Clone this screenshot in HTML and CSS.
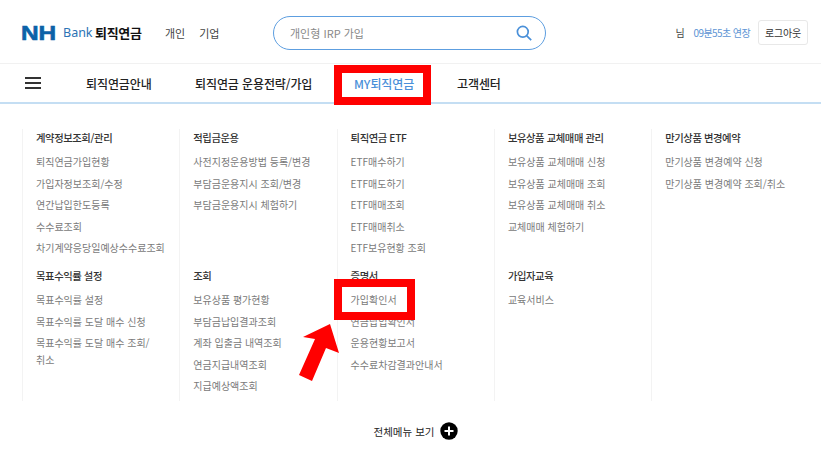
FILE: index.html
```html
<!DOCTYPE html>
<html lang="ko">
<head>
<meta charset="utf-8">
<title>NH Bank 퇴직연금</title>
<link rel="stylesheet" href="styles.css">
</head>
<body>
<header class="top">
  <div class="logo"><span class="nh">NH</span><span class="bank">Bank</span><span class="pension">퇴직연금</span></div>
  <div class="kinds"><span>개인</span><span>기업</span></div>
  <div class="search">
    <span class="placeholder">개인형 IRP 가입</span>
    <svg class="search-icon" width="16" height="16" viewBox="0 0 16 16" fill="none" stroke="#4a90d9" stroke-width="1.7"><circle cx="6.8" cy="6.8" r="5.4"/><path d="M10.8 10.8l4.4 4.4"/></svg>
  </div>
  <div class="session">
    <span class="user">님</span>
    <span class="timer">09분55초 연장</span>
    <span class="logout">로그아웃</span>
  </div>
</header>
<nav class="gnb">
  <div class="burger"><i></i><i></i><i></i></div>
  <span class="gnb-a">퇴직연금안내</span>
  <span class="gnb-b">퇴직연금 운용전략/가입</span>
  <span class="gnb-c">MY퇴직연금</span>
  <span class="gnb-d">고객센터</span>
</nav>
<main class="menu">
  <div class="col">
    <section class="upper"><h3>계약정보조회/관리</h3><ul><li>퇴직연금가입현황</li><li>가입자정보조회/수정</li><li>연간납입한도등록</li><li>수수료조회</li><li>차기계약응당일예상수수료조회</li></ul></section>
    <section><h3>목표수익률 설정</h3><ul><li>목표수익률 설정</li><li>목표수익률 도달 매수 신청</li><li class="wrap">목표수익률 도달 매수 조회/취소</li></ul></section>
  </div>
  <div class="col">
    <section class="upper"><h3>적립금운용</h3><ul><li>사전지정운용방법 등록/변경</li><li>부담금운용지시 조회/변경</li><li>부담금운용지시 체험하기</li></ul></section>
    <section><h3>조회</h3><ul><li>보유상품 평가현황</li><li>부담금납입결과조회</li><li>계좌 입출금 내역조회</li><li>연금지급내역조회</li><li>지급예상액조회</li></ul></section>
  </div>
  <div class="col">
    <section class="upper"><h3>퇴직연금 ETF</h3><ul><li>ETF매수하기</li><li>ETF매도하기</li><li>ETF매매조회</li><li>ETF매매취소</li><li>ETF보유현황 조회</li></ul></section>
    <section><h3>증명서</h3><ul><li>가입확인서</li><li>연금납입확인서</li><li>운용현황보고서</li><li>수수료차감결과안내서</li></ul></section>
  </div>
  <div class="col">
    <section class="upper"><h3>보유상품 교체매매 관리</h3><ul><li>보유상품 교체매매 신청</li><li>보유상품 교체매매 조회</li><li>보유상품 교체매매 취소</li><li>교체매매 체험하기</li></ul></section>
    <section><h3>가입자교육</h3><ul><li>교육서비스</li></ul></section>
  </div>
  <div class="col">
    <section class="upper"><h3>만기상품 변경예약</h3><ul><li>만기상품 변경예약 신청</li><li>만기상품 변경예약 조회/취소</li></ul></section>
  </div>
</main>
<footer class="all"><span>전체메뉴 보기</span><svg width="18" height="18" viewBox="0 0 18 18"><circle cx="9" cy="9" r="8.7" fill="#000"/><path d="M9 4.5v9M4.5 9h9" stroke="#fff" stroke-width="2"/></svg></footer>
<div class="mark mark-nav"></div>
<div class="mark mark-item"></div>
<svg class="arrow" width="42" height="60" viewBox="0 0 42 60"><polygon points="31,1 40,30 27,25 13,58 0,52 16,16 4,14" fill="#f00"/></svg>
</body>
</html>
```
FILE: styles.css
```css
* { box-sizing: border-box; }
html, body { margin: 0; padding: 0; }
body {
  width: 821px;
  height: 457px;
  overflow: hidden;
  position: relative;
  background: #fff;
  color: #222;
  font-family: "Noto Sans CJK KR", "Noto Sans", sans-serif;
  font-size: 11px;
}
.top {
  height: 64px;
  display: flex;
  align-items: center;
  padding: 2px 0 0 21px;
  border-bottom: 1px solid #f1f1f1;
}
.logo { display: flex; align-items: center; width: 144px; }
.nh {
  font-family: "Liberation Sans", sans-serif;
  font-weight: 700;
  font-size: 20px;
  line-height: 20px;
  color: #0b62a8;
  -webkit-text-stroke: 0.6px #0b62a8;
  transform: scaleX(1.22);
  transform-origin: left center;
  width: 42px;
}
.bank { color: #2a72b5; font-size: 12.5px; font-family: "Noto Sans", sans-serif; width: 32px; }
.pension { font-size: 13px; font-weight: 700; color: #111; letter-spacing: -0.3px; }
.kinds { display: flex; gap: 14px; width: 108px; color: #444; font-size: 11px; }
.search {
  width: 273px;
  height: 34px;
  border: 1.5px solid #5d9ee0;
  border-radius: 17px;
  display: flex;
  align-items: center;
  justify-content: space-between;
  padding: 0 13px 0 16px;
}
.placeholder { color: #888; font-size: 11px; }
.session { margin-left: auto; display: flex; align-items: center; padding-right: 13px; }
.user { color: #444; font-size: 10px; margin-right: 9px; }
.timer { color: #5d94d4; font-size: 10px; letter-spacing: -0.6px; margin-right: 8px; }
.logout {
  width: 50px;
  height: 25px;
  border: 1px solid #e8e8e8;
  border-radius: 3px;
  display: flex;
  align-items: center;
  justify-content: center;
  font-size: 10px;
  letter-spacing: -0.2px;
  color: #333;
}
.gnb {
  height: 40px;
  display: flex;
  align-items: center;
  border-bottom: 2px solid #c4def3;
  font-size: 12px;
  font-weight: 500;
  color: #222;
}
.gnb span { white-space: nowrap; letter-spacing: -0.1px; }
.burger { width: 16px; margin: 0 0 0 25px; display: flex; flex-direction: column; gap: 3px; }
.burger i { display: block; height: 2px; background: #333; }
.gnb-a { margin-left: 45px; width: 109px; }
.gnb-b { width: 159px; }
.gnb-c { width: 103px; color: #4a90d9; }
.gnb-d { display: block; }
.menu {
  display: grid;
  grid-template-columns: repeat(5, 157.3px);
  margin: 25px 0 0 22px;
  height: 272px;
}
.col { border-left: 1px solid #f3f3f3; padding-left: 13px; }
.upper { height: 138px; }
h3 { margin: 0 0 6px; font-size: 10.3px; line-height: 18px; font-weight: 500; color: #333; letter-spacing: -0.4px; }
ul { margin: 0; padding: 0; list-style: none; }
li { font-size: 10px; line-height: 17px; margin-bottom: 4.6px; color: #7a7a7a; white-space: nowrap; }
li.wrap { white-space: normal; width: 120px; }
.all { display: flex; align-items: center; justify-content: center; gap: 6px; height: 22px; margin-top: 19px; font-size: 10.5px; color: #222; padding-left: 11px; }
.mark { position: absolute; border: 8px solid #f00; }
.mark-nav { left: 334px; top: 65px; width: 97px; height: 40px; }
.mark-item { left: 334px; top: 279px; width: 81px; height: 41px; }
.arrow { position: absolute; left: 299px; top: 323px; }
```
